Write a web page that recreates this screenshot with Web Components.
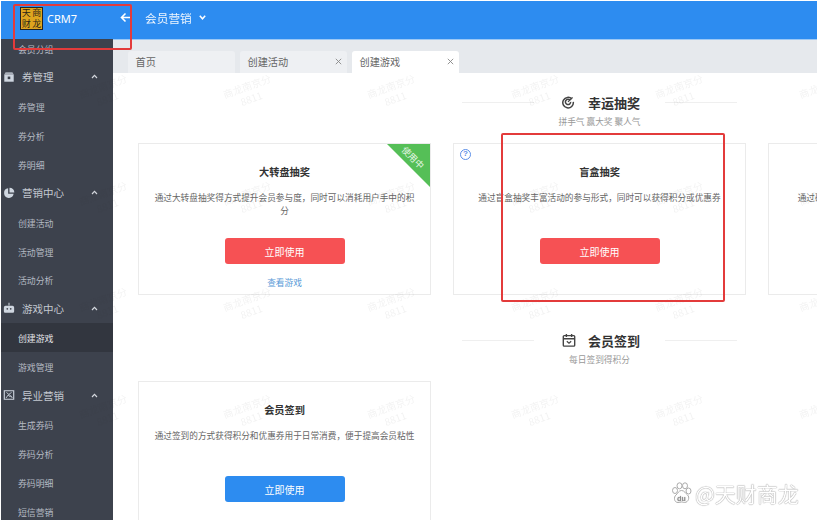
<!DOCTYPE html>
<html lang="zh">
<head>
<meta charset="utf-8">
<title>CRM7</title>
<style>
  html, body { margin: 0; height: 100%; overflow: hidden; background: #fff; }
  body { font-family: "Noto Sans CJK SC", "Liberation Sans", sans-serif; }
</style>
</head>
<body>
<crm-app>
  <top-bar slot="top"></top-bar>
  <side-nav slot="side">
    <nav-item>会员分组</nav-item>
    <nav-group icon="box">券管理</nav-group>
    <nav-item>券管理</nav-item>
    <nav-item>券分析</nav-item>
    <nav-item>券明细</nav-item>
    <nav-group icon="pie">营销中心</nav-group>
    <nav-item>创建活动</nav-item>
    <nav-item>活动管理</nav-item>
    <nav-item>活动分析</nav-item>
    <nav-group icon="robot">游戏中心</nav-group>
    <nav-item active>创建游戏</nav-item>
    <nav-item>游戏管理</nav-item>
    <nav-group icon="image">异业营销</nav-group>
    <nav-item>生成券码</nav-item>
    <nav-item>券码分析</nav-item>
    <nav-item>券码明细</nav-item>
    <nav-item>短信营销</nav-item>
  </side-nav>
  <tab-strip slot="tabs">
    <tab-item plain>首页</tab-item>
    <tab-item>创建活动</tab-item>
    <tab-item active>创建游戏</tab-item>
  </tab-strip>
  <section-head icon="target" sub="拼手气 赢大奖 聚人气">幸运抽奖</section-head>
  <card-row>
    <game-card title="大转盘抽奖" desc="通过大转盘抽奖得方式提升会员参与度，同时可以消耗用户手中的积分" badge link="查看游戏"></game-card>
    <game-card title="盲盒抽奖" desc="通过盲盒抽奖丰富活动的参与形式，同时可以获得积分或优惠券" help></game-card>
    <game-card title="砸金蛋抽奖" desc="通过砸金蛋抽奖提升用户的活跃度，同时还可以获得积分奖励"></game-card>
  </card-row>
  <section-head icon="calendar" sub="每日签到得积分">会员签到</section-head>
  <card-row>
    <game-card title="会员签到" desc="通过签到的方式获得积分和优惠券用于日常消费，便于提高会员粘性" blue></game-card>
  </card-row>
  <water-mark slot="over"></water-mark>
  <mark-box slot="over" style="left:13px;top:4px;width:119px;height:46px"></mark-box>
  <mark-box slot="over" style="left:501px;top:133px;width:224px;height:169px"></mark-box>
  <site-stamp slot="over"></site-stamp>
</crm-app>

<script>
const ICONS = {
  box: '<path d="M1.5 4h11v8.5h-11z" fill="currentColor"/><path d="M3 1.5h8L12.5 4h-11z" fill="currentColor" opacity=".75"/><path d="M5.5 6.5h3v3h-3z" fill="#3d424d"/>',
  pie: '<path d="M6 1.6a5.6 5.6 0 1 0 6.4 6.4H6z" fill="currentColor"/><path d="M7.6 .8a5.6 5.6 0 0 1 5.6 5.6H7.6z" fill="currentColor"/>',
  robot: '<path d="M7 1v3" stroke="currentColor" stroke-width="1.2"/><path d="M3 4.5h8a2 2 0 0 1 2 2V11a1.5 1.5 0 0 1-1.5 1.5h-9A1.5 1.5 0 0 1 1 11V6.500a2 2 0 0 1 2-2z" fill="currentColor"/><circle cx="5" cy="8" r="1" fill="#3d424d"/><circle cx="9" cy="8" r="1" fill="#3d424d"/>',
  image: '<path d="M1.500 2h11v10h-11z" fill="none" stroke="currentColor" stroke-width="1.3"/><path d="M3.500 10.500 6 7l2 2 1-1 2 2.500M4 4l6 5M10 4 6.500 6.500" fill="none" stroke="currentColor" stroke-width="1"/>',
  target: '<g transform="translate(0 1) scale(.86)"><path d="M13.200 4.200A7 7 0 1 0 15 8" fill="none" stroke="#444" stroke-width="2"/><path d="M10.800 6A3.500 3.500 0 1 0 11.500 8" fill="none" stroke="#444" stroke-width="2"/><path d="M8 8 14 2" stroke="#444" stroke-width="1.700"/></g>',
  calendar: '<path d="M2.500 3h11a1 1 0 0 1 1 1v10a1 1 0 0 1-1 1h-11a1 1 0 0 1-1-1V4a1 1 0 0 1 1-1z" fill="none" stroke="#444" stroke-width="1.600"/><path d="M1.500 6.500h13M5 1v3.500M11 1v3.500" fill="none" stroke="#444" stroke-width="1.600"/><path d="m5.500 9.500 2.500 2.200 2.500-2.200" fill="none" stroke="#444" stroke-width="1.400"/>'
};

class CrmApp extends HTMLElement {
  constructor() {
    super();
    this.attachShadow({ mode: 'open' }).innerHTML = `
      <style>
        :host {
          display: grid;
          grid-template-columns: 112px 1fr;
          grid-template-rows: 38px 34px 1fr;
          width: 816px;
          height: 519px;
          padding: 1px 0 1px 1px;
          position: relative;
          overflow: hidden;
          color: #333;
          filter: blur(.35px);
        }
        .top { grid-column: 1 / 3; display: block; }
        .side { grid-row: 2 / 4; overflow: hidden; min-height: 0; }
        .tabs { min-width: 0; }
        main { overflow: hidden; min-width: 0; min-height: 0; padding: 19px 0 0 25px; background: #fff; }
      </style>
      <div class="top"><slot name="top"></slot></div>
      <div class="side"><slot name="side"></slot></div>
      <div class="tabs"><slot name="tabs"></slot></div>
      <main><slot></slot></main>
      <slot name="over"></slot>`;
  }
}

class TopBar extends HTMLElement {
  constructor() {
    super();
    this.attachShadow({ mode: 'open' }).innerHTML = `
      <style>
        :host { display: flex; align-items: center; height: 38px; background: #2d8cf0; color: #fff; padding-left: 19px; box-sizing: border-box; }
        .logo {
          width: 23px; height: 23px; box-sizing: border-box; background: #dfa51e; border: 1px solid #222; color: #2a2418;
          display: grid; grid-template-columns: 1fr 1fr; font-size: 9px; line-height: 10.500px; text-align: center; font-family: "Noto Sans CJK SC", serif;
          margin-top: -3px; align-content: center;
        }
        .name { font: 11px "Noto Sans", "Liberation Sans", sans-serif; margin: -3px 0 0 4px; width: 73px; }
        svg { display: block; margin-top: -6px; }
        .menu { font-size: 11.700px; margin: -6px 0 0 14px; opacity: .92; }
        .caret { margin: -5px 0 0 7px; }
      </style>
      <div class="logo"><span>天</span><span>商</span><span>财</span><span>龙</span></div>
      <div class="name">CRM7</div>
      <svg width="11" height="11" viewBox="0 0 11 11"><path d="M10.500 5.500H1.500M5.500 1.500l-4 4 4 4" fill="none" stroke="#fff" stroke-width="1.600"/></svg>
      <div class="menu">会员营销</div>
      <svg class="caret" width="7" height="5" viewBox="0 0 7 5"><path d="M.8.800 3.500 3.800 6.200.800" fill="none" stroke="#fff" stroke-width="1.500"/></svg>`;
  }
}

class SideNav extends HTMLElement {
  constructor() {
    super();
    this.attachShadow({ mode: 'open' }).innerHTML = `
      <style>
        :host { display: flex; flex-direction: column; height: 100%; background: #3d424d; overflow: hidden; }
        .list { display: flex; flex-direction: column; margin-top: -5.500px; }
      </style>
      <div class="list"><slot></slot></div>`;
  }
}

class NavGroup extends HTMLElement {
  constructor() {
    super();
    const icon = ICONS[this.getAttribute('icon')] || '';
    this.attachShadow({ mode: 'open' }).innerHTML = `
      <style>
        :host { display: flex; align-items: center; height: 28.940px; padding-left: 2px; color: #c3c8d0; font-size: 10.500px; flex: none; }
        .ico { width: 12px; height: 12px; margin-right: 7px; color: #cfd6e0; flex: none; }
        .label { flex: 1; }
        .up { margin-right: 15.500px; }
      </style>
      <svg class="ico" viewBox="0 0 14 14">${icon}</svg>
      <span class="label"><slot></slot></span>
      <svg class="up" width="7" height="5" viewBox="0 0 7 5"><path d="M1 4 3.500 1.300 6 4" fill="none" stroke="#d5d8de" stroke-width="1.200"/></svg>`;
  }
}

class NavItem extends HTMLElement {
  constructor() {
    super();
    this.attachShadow({ mode: 'open' }).innerHTML = `
      <style>
        :host { display: flex; align-items: center; height: 28.940px; box-sizing: border-box; padding: 3px 0 0 17px; color: #b4b9c2; font-size: 8.900px; flex: none; }
        :host([active]) { background: #32363f; color: #e2e4e8; }
      </style>
      <slot></slot>`;
  }
}

class TabStrip extends HTMLElement {
  constructor() {
    super();
    this.attachShadow({ mode: 'open' }).innerHTML = `
      <style>
        :host { display: flex; gap: 5px; align-items: flex-end; height: 34px; box-sizing: border-box; background: #e6e9ed; padding-left: 15px; border-top: 1px solid #9cc8f5; }
      </style>
      <slot></slot>`;
  }
}

class TabItem extends HTMLElement {
  constructor() {
    super();
    const close = this.hasAttribute('plain') ? '' : '<svg width="7" height="7" viewBox="0 0 7 7"><path d="m.8.800 5.400 5.400M6.200.800.800 6.200" stroke="#888" stroke-width=".9"/></svg>';
    this.attachShadow({ mode: 'open' }).innerHTML = `
      <style>
        :host { display: flex; align-items: center; justify-content: space-between; width: 107px; height: 22px; box-sizing: border-box; padding: 0 5px 2px 7.500px; background: #eef0f3; border-radius: 3px 3px 0 0; color: #666; font-size: 10.200px; }
        :host([active]) { background: #fff; }
      </style>
      <span><slot></slot></span>${close}`;
  }
}

class SectionHead extends HTMLElement {
  constructor() {
    super();
    const icon = ICONS[this.getAttribute('icon')] || '';
    this.attachShadow({ mode: 'open' }).innerHTML = `
      <style>
        :host { display: flex; flex-direction: column; align-items: center; width: 923px; }
        .row { display: flex; align-items: center; width: 275px; height: 20px; }
        .line { flex: 1; height: 1px; background: #efefef; }
        .mid { display: flex; align-items: center; justify-content: center; gap: 12px; width: 131px; box-sizing: border-box; padding-left: 3px; color: #333; font-size: 13px; font-weight: 700; }
        svg { width: 14px; height: 14px; }
        .sub { margin: 4px 0 15px; height: 12px; line-height: 12px; font-size: 8.700px; color: #999; }
      </style>
      <div class="row">
        <div class="line"></div>
        <div class="mid"><svg viewBox="0 0 16 16">${icon}</svg><span><slot></slot></span></div>
        <div class="line"></div>
      </div>
      <div class="sub">${this.getAttribute('sub')}</div>`;
  }
}

class CardRow extends HTMLElement {
  constructor() {
    super();
    this.attachShadow({ mode: 'open' }).innerHTML = `
      <style>
        :host { display: grid; grid-template-columns: repeat(3, 293px); gap: 22px; width: 923px; margin-bottom: 35px; }
      </style>
      <slot></slot>`;
  }
}

class GameCard extends HTMLElement {
  constructor() {
    super();
    const link = this.getAttribute('link');
    const badge = this.hasAttribute('badge') ? '<div class="badge"><span>使用中</span></div>' : '';
    const help = this.hasAttribute('help') ? '<div class="help">?</div>' : '';
    this.attachShadow({ mode: 'open' }).innerHTML = `
      <style>
        :host { display: flex; flex-direction: column; align-items: center; position: relative; overflow: hidden; height: 152px; box-sizing: border-box; border: 1px solid #ebebeb; padding: 21px 14px 0; text-align: center; background: #fff; }
        h3 { margin: 0; font-size: 10.200px; line-height: 14px; height: 14px; color: #333; font-weight: 700; }
        p { margin: 12px 0 0; height: 26px; font-size: 8.670px; line-height: 13px; color: #666; }
        button { display: block; flex: none; margin-top: 21px; width: 120px; height: 26px; border: 0; border-radius: 3px; background: #f65154; color: #fff; font: inherit; font-size: 10px; padding: 0; }
        :host([blue]) button { background: #2d8cf0; }
        a { margin-top: 13px; font-size: 8.700px; line-height: 12px; color: #5a9bd8; }
        .badge { position: absolute; top: 0; right: 0; width: 43px; height: 43px; background: #55bf57; clip-path: polygon(0 0, 100% 0, 100% 100%); }
        .badge span { position: absolute; left: 8px; top: 8px; width: 36px; text-align: center; color: #e8f7e8; font-size: 9px; line-height: 11px; transform: rotate(45deg); }
        .help { position: absolute; left: 6px; top: 5px; width: 11px; height: 11px; box-sizing: border-box; border: 1.300px solid #5b8fe8; border-radius: 50%; color: #5b8fe8; font: 700 8px/8.500px "Liberation Sans", sans-serif; text-align: center; }
      </style>
      ${badge}${help}
      <h3>${this.getAttribute('title')}</h3>
      <p>${this.getAttribute('desc')}</p>
      <button>立即使用</button>
      ${link ? `<a>${link}</a>` : ''}`;
  }
}

// tiled stamp, repeats on a grid over the whole picture
class WaterMark extends HTMLElement {
  constructor() {
    super();
    let cells = '';
    for (let i = 0; i < 24; i++) cells += '<div class="cell"><div>商龙南京分<br>8811</div></div>';
    this.attachShadow({ mode: 'open' }).innerHTML = `
      <style>
        :host { position: absolute; inset: 0; pointer-events: none; display: grid; grid-template-columns: repeat(6, 144px); grid-auto-rows: 106.500px; padding: 39px 0 0 33px; overflow: hidden; }
        .cell { display: flex; align-items: center; justify-content: center; }
        .cell div { transform: rotate(-20deg); font-size: 10px; line-height: 13px; text-align: center; color: rgba(60, 60, 60, .065); }
      </style>
      ${cells}`;
  }
}

class MarkBox extends HTMLElement {
  constructor() {
    super();
    this.attachShadow({ mode: 'open' }).innerHTML = `
      <style>
        :host { position: absolute; box-sizing: border-box; border: 2px solid #e33b3b; border-radius: 2px; pointer-events: none; }
      </style>`;
  }
}

class SiteStamp extends HTMLElement {
  constructor() {
    super();
    this.attachShadow({ mode: 'open' }).innerHTML = `
      <style>
        :host { position: absolute; left: 671px; top: 480px; display: flex; align-items: center; gap: 3px; color: #fff; font-size: 21px; line-height: 26px; text-shadow: 0 0 1px #999, 0 0 1px #999; white-space: nowrap; pointer-events: none; }
        svg { width: 21px; height: 23px; }
      </style>
      <svg viewBox="0 0 20 23">
        <g fill="#fff" stroke="#aaa" stroke-width="1">
          <ellipse cx="3.500" cy="8.500" rx="2.500" ry="3"/><ellipse cx="8" cy="3.800" rx="2.500" ry="3"/><ellipse cx="13.500" cy="3.800" rx="2.500" ry="3"/><ellipse cx="17" cy="9" rx="2.500" ry="3"/>
          <path d="M10 8.500c3 0 4 3 6 4.500 2.500 2 1 7.500-3 7.500-1.500 0-2-.5-3-.5s-2 .5-3.500.5C2.500 20.500 2 15 4.500 13c2-1.500 2.500-4.500 5.500-4.500z"/>
        </g>
        <text x="10" y="18.500" text-anchor="middle" font-size="7.500" font-family="Liberation Sans, sans-serif" fill="#888">du</text>
      </svg>
      <span>@天财商龙</span>`;
  }
}

customElements.define('crm-app', CrmApp);
customElements.define('top-bar', TopBar);
customElements.define('side-nav', SideNav);
customElements.define('nav-group', NavGroup);
customElements.define('nav-item', NavItem);
customElements.define('tab-strip', TabStrip);
customElements.define('tab-item', TabItem);
customElements.define('section-head', SectionHead);
customElements.define('card-row', CardRow);
customElements.define('game-card', GameCard);
customElements.define('water-mark', WaterMark);
customElements.define('mark-box', MarkBox);
customElements.define('site-stamp', SiteStamp);
</script>
</body>
</html>
